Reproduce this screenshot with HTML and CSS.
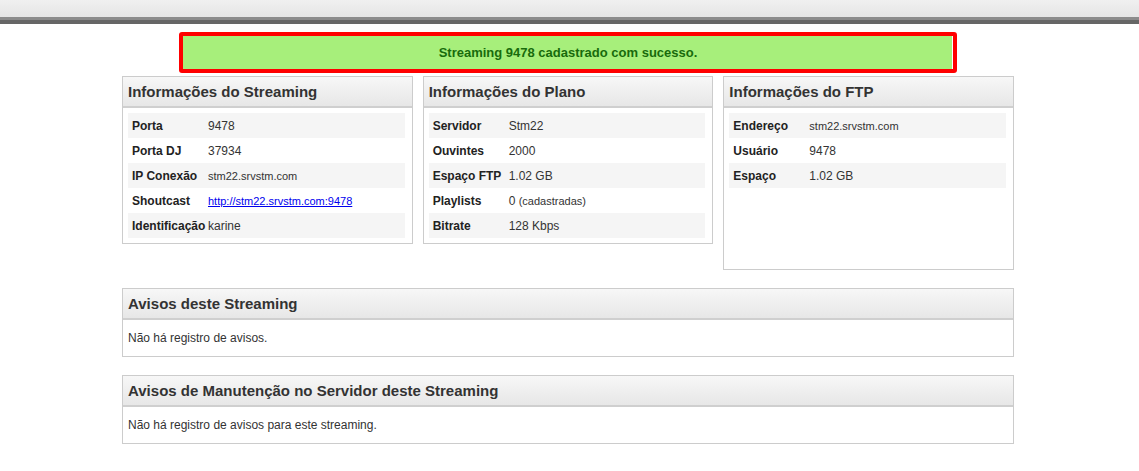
FILE: index.html
```html
<!DOCTYPE html>
<html lang="pt-BR">
<head>
<meta charset="utf-8">
<title>Streaming</title>
<link rel="stylesheet" href="styles.css">
</head>
<body>
<div class="topbar"></div>
<div class="page">
  <div class="alert">Streaming 9478 cadastrado com sucesso.</div>

  <div class="grid">
    <div class="panel">
      <div class="panel-head">Informações do Streaming</div>
      <div class="panel-body">
        <table class="info">
          <tr><th>Porta</th><td>9478</td></tr>
          <tr><th>Porta DJ</th><td>37934</td></tr>
          <tr><th>IP Conexão</th><td class="small">stm22.srvstm.com</td></tr>
          <tr><th>Shoutcast</th><td class="small"><a href="#">http://stm22.srvstm.com:9478</a></td></tr>
          <tr><th>Identificação</th><td>karine</td></tr>
        </table>
      </div>
    </div>

    <div class="panel">
      <div class="panel-head">Informações do Plano</div>
      <div class="panel-body">
        <table class="info">
          <tr><th>Servidor</th><td>Stm22</td></tr>
          <tr><th>Ouvintes</th><td>2000</td></tr>
          <tr><th>Espaço FTP</th><td>1.02 GB</td></tr>
          <tr><th>Playlists</th><td>0 <span class="small">(cadastradas)</span></td></tr>
          <tr><th>Bitrate</th><td>128 Kbps</td></tr>
        </table>
      </div>
    </div>

    <div class="panel">
      <div class="panel-head">Informações do FTP</div>
      <div class="panel-body panel-body--tall">
        <table class="info">
          <tr><th>Endereço</th><td class="small">stm22.srvstm.com</td></tr>
          <tr><th>Usuário</th><td>9478</td></tr>
          <tr><th>Espaço</th><td>1.02 GB</td></tr>
        </table>
      </div>
    </div>
  </div>

  <div class="panel wide">
    <div class="panel-head">Avisos deste Streaming</div>
    <div class="panel-text">Não há registro de avisos.</div>
  </div>

  <div class="panel wide">
    <div class="panel-head">Avisos de Manutenção no Servidor deste Streaming</div>
    <div class="panel-text">Não há registro de avisos para este streaming.</div>
  </div>
</div>
</body>
</html>
```

FILE: styles.css
```css
html, body {
  margin: 0;
  padding: 0;
  background: #ffffff;
  font-family: "Liberation Sans", Arial, sans-serif;
  color: #333333;
}

.topbar {
  height: 24px;
  background: linear-gradient(to bottom,
    #f0f0f0 0px, #e5e5e5 17px,
    #8c8c8c 17px, #8c8c8c 20px,
    #666666 20px, #666666 24px);
}

.page {
  width: 1136px;
  padding-top: 8px;
}

.alert {
  box-sizing: border-box;
  width: 778px;
  height: 41px;
  margin: 0 auto;
  border: 4px solid #ff0000;
  border-radius: 3px;
  background: #a7ef7b;
  box-shadow: inset -1px 0 0 #ffffff;
  color: #186b0c;
  font-size: 13px;
  font-weight: bold;
  text-align: center;
  line-height: 33px;
}

.grid {
  width: 892px;
  margin: 3px auto 0;
  display: grid;
  grid-template-columns: 1fr 1fr 1fr;
  gap: 10px;
  align-items: start;
}

.panel {
  border: 1px solid #cccccc;
  background: #ffffff;
}

.panel.wide {
  width: 892px;
  box-sizing: border-box;
  margin: 18px auto 0;
}

.panel-head {
  height: 29px;
  line-height: 30px;
  padding-left: 5px;
  background: linear-gradient(to bottom, #f7f7f7, #e7e7e7);
  border-bottom: 2px solid #cfcfcf;
  font-size: 15px;
  font-weight: bold;
  color: #333333;
  white-space: nowrap;
}

.panel-body {
  padding: 5px 7px 5px 5px;
}

.panel-body--tall {
  height: 151px;
}

.info {
  width: 100%;
  border-collapse: collapse;
}

.info tr {
  height: 25px;
}

.info tr:nth-child(odd) {
  background: #f5f5f5;
}

.info th {
  width: 76px;
  padding: 0 0 0 4px;
  text-align: left;
  font-size: 12px;
  font-weight: bold;
  color: #222222;
  white-space: nowrap;
}

.info td {
  padding: 0;
  font-size: 12px;
  color: #333333;
  white-space: nowrap;
}

.info td.small,
.info .small {
  font-size: 11px;
}

.info a {
  color: #0000ee;
  text-decoration: underline;
}

.panel-text {
  padding: 11px 5px 10px;
  font-size: 12px;
  line-height: 15px;
  color: #333333;
}
```
